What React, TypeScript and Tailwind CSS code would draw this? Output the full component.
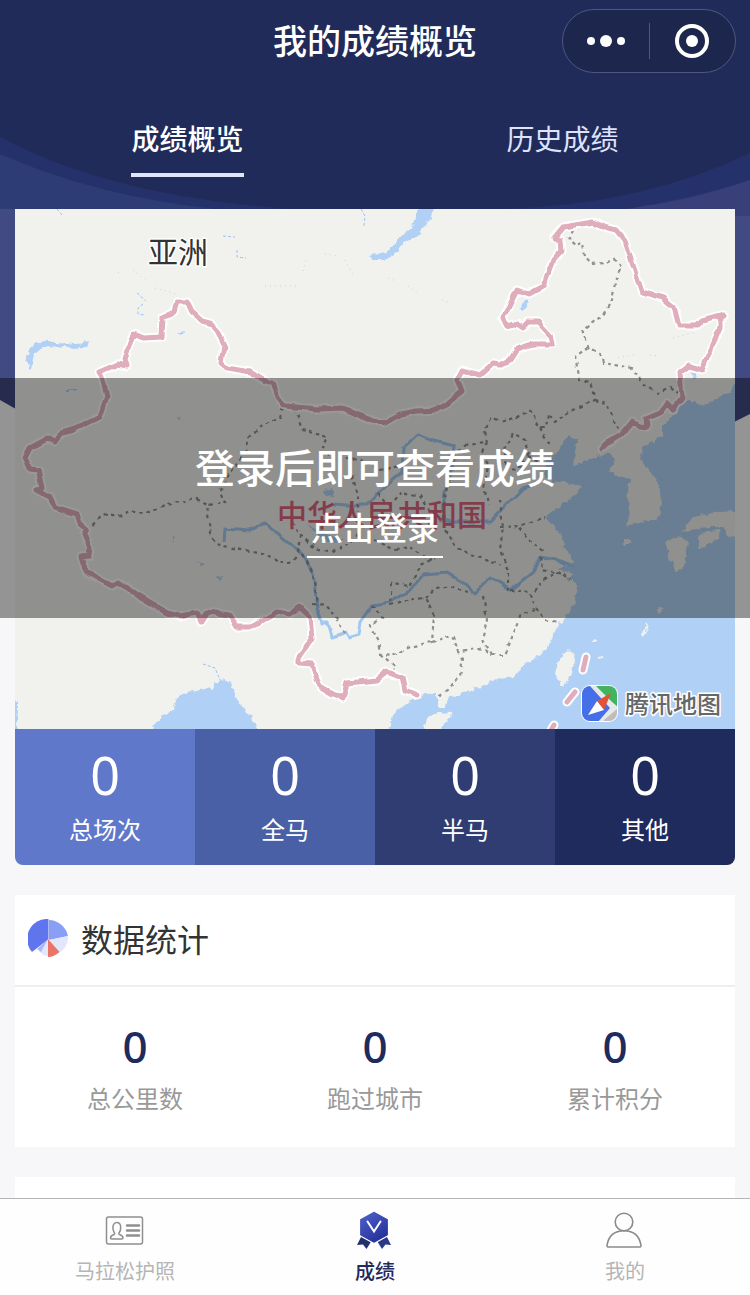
// src/App.tsx
import React from "react";

interface CountItem {
  label: string;
  value: number;
  className?: string;
}

interface TabItem {
  label: string;
  icon: React.ReactNode;
  active?: boolean;
}

const HeaderBackdrop: React.FC = () => (
  <svg
    aria-hidden="true"
    className="absolute inset-x-0 top-0 h-[480px] w-full"
    viewBox="0 0 750 480"
    preserveAspectRatio="none"
  >
    <path d="M0 0H750V414Q680 452 560 470H180Q70 442 0 400Z" fill="#424a84" />
    <path d="M0 0H750V216H735V209H0Z" fill="#2e3c76" />
    <path d="M750 120V216H735V209H600L627 208Q692 201 750 180Z" fill="#393f79" />
    <path d="M0 0H750V180Q692 199 627 209H215Q95 196 0 154Z" fill="#25316a" />
    <path d="M0 0H750V153Q640 206 500 209H290Q110 196 0 137Z" fill="#212b5a" />
  </svg>
);

const ChinaMap: React.FC = () => {
  const border =
    "M602 449L612 440L623 433L632 422L640 426L647 427L646 419L660 413L667 403L673 410L682 397L680 373L689 366L702 370L712 347L720 328L720 320L725 314L703 320L697 326L679 326L674 307L663 298L642 292L633 265L625 240L617 230L607 228L593 222L563 227L554 238L561 240L562 250L553 260L546 278L545 285L528 294L517 290L503 319L507 326L517 323L523 327L528 322L538 322L550 335L552 344L533 344L517 349L510 360L500 365L492 364L480 375L462 370L457 380L462 391L447 404L437 410L417 411L400 414L385 423L367 419L343 408L317 409L285 406L278 397L273 383L263 380L250 372L227 368L221 363L224 345L220 337L213 324L202 321L192 312L187 302L177 302L174 312L163 317L162 337L143 338L133 334L125 359L127 366L118 364L99 372L102 377L107 397L100 417L73 430L62 433L55 442L47 439L30 448L25 458L30 469L38 470L42 488L36 490L50 497L55 507L77 514L80 523L87 529L84 535L90 548L89 555L81 556L86 572L112 586L118 582L137 595L167 613L180 616L197 613L201 622L207 612L230 615L237 627L250 627L255 625L277 612L290 615L300 607L310 617L312 638L299 657L299 663L312 664L320 687L332 694L343 698L347 683L377 680L387 672L402 678L405 690L418 695";

  const provinces = [
    "M573 229L569 240L575 245L583 243L585 257L590 263L607 262L615 258L622 268L615 283L612 300L603 315L583 330L588 347L600 353L603 363L632 368L643 383L657 393L670 387L677 393",
    "M588 347L575 357L580 380L590 382L595 400L567 413L555 422L548 413L546 428L540 428L530 410L517 417L500 422L492 418L485 430L487 443L465 445L450 456L446 492L442 520",
    "M595 400L607 403L618 430M540 428L550 445M487 443L480 456L488 466L484 488L490 505",
    "M505 450L513 433L525 440L528 455L518 470L505 468L505 450M528 455L540 462",
    "M283 408L280 418L260 427L250 438L244 455L225 480L220 493L225 503L207 505",
    "M295 408L302 430L328 437L323 448L335 460L360 458L380 470L400 466",
    "M87 529L103 514L117 517L130 511L143 514L173 503L197 499L207 505L210 533L220 545L250 552L263 553L278 563L290 563L298 553L300 535L292 522",
    "M300 535L315 548L333 552L352 542L360 530M303 555L313 573L317 605M312 603L325 605L337 620L345 633",
    "M352 475L358 495L358 512M378 493L390 505L402 492L420 496L428 510M375 540L395 550L412 548L432 560",
    "M445 530L455 547L475 556L500 565M390 602L392 584L410 586L420 565L435 558",
    "M372 605L382 618L370 625L378 640L380 654L395 655L410 647L432 642L434 615L425 598L405 600L390 605M380 654L395 666L390 674",
    "M432 642L452 635L458 650L463 658L460 675L448 690L438 696M425 598L432 590L450 586L468 592",
    "M483 596L487 620L482 640L492 655L480 648L462 652M492 655L505 655L515 630L522 615L535 610",
    "M510 590L530 592L535 607L546 620L560 622M535 592L545 578L560 572L570 580",
    "M500 500L503 527L500 550L508 570L508 590M500 527L522 526L545 518M520 528L535 545L545 553M540 557L542 570L565 574",
  ];

  const sea =
    "M735 383L730 392L703 406L687 400L677 410L663 427L663 435L643 447L639 458L643 463L657 480L662 503L658 518L645 521L627 527L630 510L627 495L630 480L610 472L615 460L610 452L600 455L583 462L573 465L575 452L577 440L568 436L557 453L546 460L545 474L553 483L563 481L582 487L575 495L545 518L560 532L565 548L575 563L558 569L575 574L566 578L577 585L575 603L560 623L552 637L547 650L522 667L513 677L500 679L463 693L447 698L445 708L438 708L437 693L417 695L393 715L390 729H735Z";

  return (
    <svg
      role="img"
      aria-label="中国地图"
      className="block aspect-[18/13] w-full"
      viewBox="15 209 720 520"
      preserveAspectRatio="xMidYMid slice"
    >
      <defs>
        <filter id="coast" x="-5%" y="-5%" width="110%" height="110%">
          <feTurbulence type="fractalNoise" baseFrequency="0.18" numOctaves="2" seed="4" />
          <feDisplacementMap in="SourceGraphic" scale="6" xChannelSelector="R" yChannelSelector="G" />
        </filter>
        <filter id="wobble" x="-5%" y="-5%" width="110%" height="110%">
          <feTurbulence type="fractalNoise" baseFrequency="0.09" numOctaves="1" seed="7" />
          <feDisplacementMap in="SourceGraphic" scale="6" xChannelSelector="R" yChannelSelector="G" />
        </filter>
      </defs>
      <rect x="15" y="209" width="720" height="520" fill="#f1f1ee" />

      {/* water */}
      <g filter="url(#coast)" fill="#b0d1f5">
        <path d={sea} />
        <path d="M733 384H745V735H733Z" />
        <path d="M385 735L393 722H740V735Z" />
        <path d="M148 735L160 718L173 710L178 695L200 690L213 688L220 678L230 682L238 702L250 715L260 735Z" />
        <path d="M12 695L18 705L17 735H12Z" />
        <path d="M422 200H437L430 219L424 225L420 234L404 243L394 255L384 260H373L368 255L382 254L391 249L398 238L412 228Z" />
        <path d="M25 360L31 348L40 341L56 343L76 344L89 342L87 347L77 349L65 346L44 347L34 354L31 368Z" />
        <path d="M518 309L527 299L529 303L523 311Z" />
        <path d="M689 373L698 374L695 379Z" />
        <path d="M323 491L331 488L335 496L325 497Z" />
        <path d="M178 333L184 331L183 336Z" />
        <path d="M65 389L77 389V391L65 391Z" />
        <path d="M174 418L182 417L180 420Z" />
        <path d="M197 563L205 562L203 566Z" />
        <path d="M215 577L224 576L220 580Z" />
        <path d="M306 525L325 533L345 540L330 543Z" />
      </g>
      <g filter="url(#coast)" fill="#f1f1ee">
        <path d="M680 532L692 518L713 512L742 511V541L727 535L723 527L707 527Z" />
        <path d="M697 538L707 531L720 530L718 538L700 550Z" />
        <path d="M665 542L680 536L689 543L683 567L675 572L670 557Z" />
        <path d="M624 540H632V544H624Z" />
        <path d="M568 649L575 652L572 673L563 688L555 673L560 657Z" />
        <path d="M427 718L437 712L452 713L447 723L437 731H424Z" />
        <path d="M592 641L597 640M642 637L648 625M598 659L604 658" stroke="#f1f1ee" strokeWidth="2" />
        <path d="M657 610L663 608L658 614Z" />
      </g>

      {/* rivers */}
      <g filter="url(#wobble)" fill="none" stroke="#a0c8f0" strokeWidth="3" strokeLinejoin="round">
        <path d="M224 542L225 529L250 531L265 523L280 535L303 555L313 573L317 607L322 623L328 623L332 637L347 632L350 638L358 635L360 622L372 605L390 602L410 590L423 575L447 573L467 585L475 593L490 578L500 583L510 590L533 572L540 557L557 560L575 567" />
        <path d="M335 504L347 505L367 505L378 493L390 482L402 472L403 448L417 435L430 440L455 446L452 470L445 492L442 520L450 522L490 522L503 508L523 488L540 482" />
      </g>
      <path
        d="M137 293L146 301M143 304L138 308V314L144 315M223 236L235 237M237 250V257L246 258M361 209L365 216L364 226M57 209L62 215M174 536L173 542M203 664L215 668L220 680"
        fill="none"
        stroke="#9cc4ee"
        strokeWidth="1"
        strokeDasharray="3 2"
      />
      <path
        d="M118 273L120 272M133 270L148 282M155 288L176 294M265 286H300M303 271L306 260M325 254L337 256M345 260L353 275M388 278L396 281M408 286L418 294M442 300L450 303M673 338L695 332M618 358L637 354M650 355L657 356"
        fill="none"
        stroke="#d0d0d0"
        strokeWidth="1"
        strokeDasharray="1 4"
      />

      <g filter="url(#wobble)" fill="none">
        {provinces.map((d) => (
          <path key={d} d={d} stroke="#8f8f8d" strokeWidth="2.200" strokeDasharray="3.500 4" />
        ))}
      </g>
      <g filter="url(#wobble)" fill="none" strokeLinecap="round" strokeLinejoin="round">
        <path d={border} stroke="#ffffff" strokeWidth="9" />
        <path d={border} stroke="#dfadbb" strokeWidth="5" />
      </g>
      <g fill="none" strokeLinecap="round">
        <path d="M586 657L583 670M575 692L567 702M554 725L550 732" stroke="#ffffff" strokeWidth="9" />
        <path d="M586 657L583 670M575 692L567 702M554 725L550 732" stroke="#dfadbb" strokeWidth="5" />
      </g>

      {/* labels */}
      <g className="font-['Noto_Sans_CJK_SC',sans-serif]" stroke="#ffffff" paintOrder="stroke" strokeLinejoin="round">
        <text x="148" y="263" fontSize="30" fill="#333333" strokeWidth="3">
          亚洲
        </text>
        <text x="277" y="526" fontSize="30" fontWeight="500" fill="#dc657e" strokeWidth="0">
          中华人民共和国
        </text>
        <text x="625" y="713" fontSize="24" fontWeight="500" fill="#66676a" strokeWidth="3">
          腾讯地图
        </text>
      </g>

      {/* map provider logo */}
      <g>
        <clipPath id="logoClip">
          <rect x="582" y="686" width="35" height="35" rx="8" />
        </clipPath>
        <rect x="581" y="685" width="37" height="37" rx="9" fill="#ffffff" />
        <g clipPath="url(#logoClip)">
          <rect x="582" y="686" width="35" height="35" fill="#e6e8ea" />
          <path d="M582 686H590L610 708L598 722H582Z" fill="#456fe8" />
          <path d="M596 686H618V707L611 701Z" fill="#42b45f" />
          <path d="M604 720L617 709V722H604Z" fill="#c2bdbb" />
          <path d="M611 693L597 701L604 710L611 693Z" fill="#e25333" />
          <path d="M597 701L604 710L588 715Z" fill="#ffffff" />
        </g>
      </g>
    </svg>
  );
};

const PieIcon: React.FC = () => (
  <svg aria-hidden="true" className="size-10" viewBox="0 0 40 40">
    <path d="M21 21V1A20 20 0 0 1 40 17Z" fill="#889ff5" />
    <path d="M21 21L40 17A19 19 0 0 1 31 34Z" fill="#e3e7fb" />
    <path d="M20 20L31.500 33Q26 38 20 38Z" fill="#ea7468" />
    <path d="M20 20V37Q15 37 11 32Z" fill="#e3e7fb" />
    <path d="M20 20L13 33L9 30Z" fill="#a9b9f8" />
    <path d="M20.500 20V0A20 20 0 0 0 4 33Z" fill="#5f75ee" />
  </svg>
);

const PassportIcon: React.FC = () => (
  <svg aria-hidden="true" className="size-10" viewBox="0 0 40 40" fill="none" stroke="#8f8f8f">
    <rect x="1.500" y="7" width="36" height="27" rx="2" strokeWidth="1.500" />
    <path
      d="M9 24.500c-2.500.8-3.500 1.500-3.500 3.500 0 .7.500 1 1.200 1h10.100c.7 0 1.200-.3 1.200-1 0-2-1-2.700-3.500-3.500-.8-.3-.8-1.200-.2-2 .9-1.200 1.400-2.500 1.400-5 0-3-1.600-5-3.900-5s-3.900 2-3.900 5c0 2.500.5 3.800 1.300 5 .6.800.6 1.700-.2 2z"
      strokeWidth="1.500"
    />
    <path d="M22 15.500h12M22 20.500h12M22 25.500h12" strokeWidth="2.500" strokeLinecap="round" />
  </svg>
);

const MedalIcon: React.FC = () => (
  <svg aria-hidden="true" className="size-10" viewBox="0 0 40 40">
    <defs>
      <linearGradient id="medal" x1="0" y1="0" x2="0.6" y2="1">
        <stop offset="0" stopColor="#5064cd" />
        <stop offset="1" stopColor="#25309a" />
      </linearGradient>
    </defs>
    <path d="M6.500 26L2 35L8 34.500L11.500 39L16.500 31Z" fill="#232e6d" />
    <path d="M31.500 26L36 35L30.500 34.500L27 39L22 31Z" fill="#2c3986" />
    <path
      d="M19 1L33.500 9V25.500L19 33.500L4.500 25.500V9Z"
      fill="url(#medal)"
      stroke="#ffffff"
      strokeWidth="1.200"
      strokeLinejoin="round"
    />
    <path d="M12.500 11.500L19 21.500L25.500 11.500" fill="none" stroke="#ffffff" strokeWidth="2" strokeLinecap="round" />
  </svg>
);

const UserIcon: React.FC = () => (
  <svg aria-hidden="true" className="size-10" viewBox="0 0 40 40" fill="none" stroke="#8a8a8a" strokeWidth="1.600">
    <circle cx="19" cy="12" r="8.800" />
    <path d="M3 37Q2 37 2 35.500C3.500 26 9 20.800 19 20.800S34.500 26 36 35.500Q36 37 35 37Z" />
  </svg>
);

const App: React.FC = () => {
  const races: CountItem[] = [
    { label: "总场次", value: 0, className: "bg-[#6078ca]" },
    { label: "全马", value: 0, className: "bg-[#495fa6]" },
    { label: "半马", value: 0, className: "bg-[#303d72]" },
    { label: "其他", value: 0, className: "bg-[#1f2a5d]" },
  ];

  const totals: CountItem[] = [
    { label: "总公里数", value: 0 },
    { label: "跑过城市", value: 0 },
    { label: "累计积分", value: 0 },
  ];

  const tabs: TabItem[] = [
    { label: "马拉松护照", icon: <PassportIcon /> },
    { label: "成绩", icon: <MedalIcon />, active: true },
    { label: "我的", icon: <UserIcon /> },
  ];

  return (
    <div className="relative flex min-h-screen flex-col bg-[#f7f7f9] font-['Noto_Sans_CJK_SC',sans-serif]">
      <HeaderBackdrop />

      <header className="relative text-white">
        <div className="grid grid-cols-[1fr_auto_1fr] items-center px-[14px] pt-[9px]">
          <h1 className="col-start-2 pb-0.5 text-[34px] leading-[48px] font-medium">我的成绩概览</h1>
          <div className="flex h-16 w-[174px] items-center justify-self-end rounded-full border border-[#4f5780] bg-[#1d264c]">
            <button type="button" aria-label="更多" className="flex flex-1 items-center justify-center gap-[5px]">
              <span className="size-2 rounded-full bg-white" />
              <span className="size-3 rounded-full bg-white" />
              <span className="size-2 rounded-full bg-white" />
            </button>
            <span className="h-9 w-px bg-[#4f5780]" />
            <button type="button" aria-label="关闭" className="flex flex-1 items-center justify-center">
              <span className="flex size-[34px] items-center justify-center rounded-full border-4 border-white">
                <span className="size-3 rounded-full bg-white" />
              </span>
            </button>
          </div>
        </div>

        <nav className="mt-[45px] mb-8 grid grid-cols-2 justify-items-center text-[28px] leading-10">
          <a href="#overview" className="border-b-4 border-[#e0e5fb] pb-[15px] font-medium">
            成绩概览
          </a>
          <a href="#history" className="border-b-4 border-transparent pb-[15px] text-[#dde3fa]">
            历史成绩
          </a>
        </nav>
      </header>

      <main className="relative flex flex-1 flex-col gap-[30px]">
        <section className="relative px-[15px]">
          <ChinaMap />
          <dl className="grid grid-cols-4 overflow-hidden rounded-b-lg text-center text-white">
            {races.map((item) => (
              <div key={item.label} className={`flex flex-col-reverse gap-1 pt-[14px] pb-[18px] ${item.className}`}>
                <dt className="text-2xl leading-9">{item.label}</dt>
                <dd className="font-['Noto_Sans',sans-serif] text-[52px] leading-[64px]">{item.value}</dd>
              </div>
            ))}
          </dl>

          {/* login mask over the map */}
          <div className="absolute inset-x-0 top-[169px] flex h-60 flex-col items-center bg-black/40 pt-[60px] text-white">
            <p className="text-[40px] leading-[56px] font-medium">登录后即可查看成绩</p>
            <a href="#login" className="mt-2 border-b-2 border-white px-1 pb-1.5 text-[32px] leading-[48px] font-medium">
              点击登录
            </a>
          </div>
        </section>

        <section className="mx-[15px] bg-white">
          <div className="flex h-[92px] items-center gap-[13px] border-b-2 border-[#efeff1] px-[13px] pb-0.5">
            <PieIcon />
            <h2 className="pb-0.5 text-[32px] leading-[48px] text-[#333333]">数据统计</h2>
          </div>
          <dl className="grid grid-cols-3 pt-[29px] pb-[31px] text-center">
            {totals.map((item) => (
              <div key={item.label} className="flex flex-col-reverse gap-1">
                <dt className="text-2xl leading-9 text-[#999999]">{item.label}</dt>
                <dd className="font-['Noto_Sans',sans-serif] text-[44px] leading-[60px] font-medium text-[#1f2a5d]">
                  {item.value}
                </dd>
              </div>
            ))}
          </dl>
        </section>

        <section className="mx-[15px] flex-1 bg-white" />
      </main>

      <nav className="sticky bottom-0 grid grid-cols-3 border-t border-[#b4b4b6] bg-[#fefefe] pt-[11px] pb-2.5">
        {tabs.map((tab) => (
          <a
            key={tab.label}
            href="#tab"
            className={`flex flex-col items-center gap-[7px] text-xl leading-7 ${
              tab.active ? "font-medium text-[#1f2a5d]" : "text-[#b5b5b5]"
            }`}
          >
            {tab.icon}
            {tab.label}
          </a>
        ))}
      </nav>
    </div>
  );
};

export default App;
